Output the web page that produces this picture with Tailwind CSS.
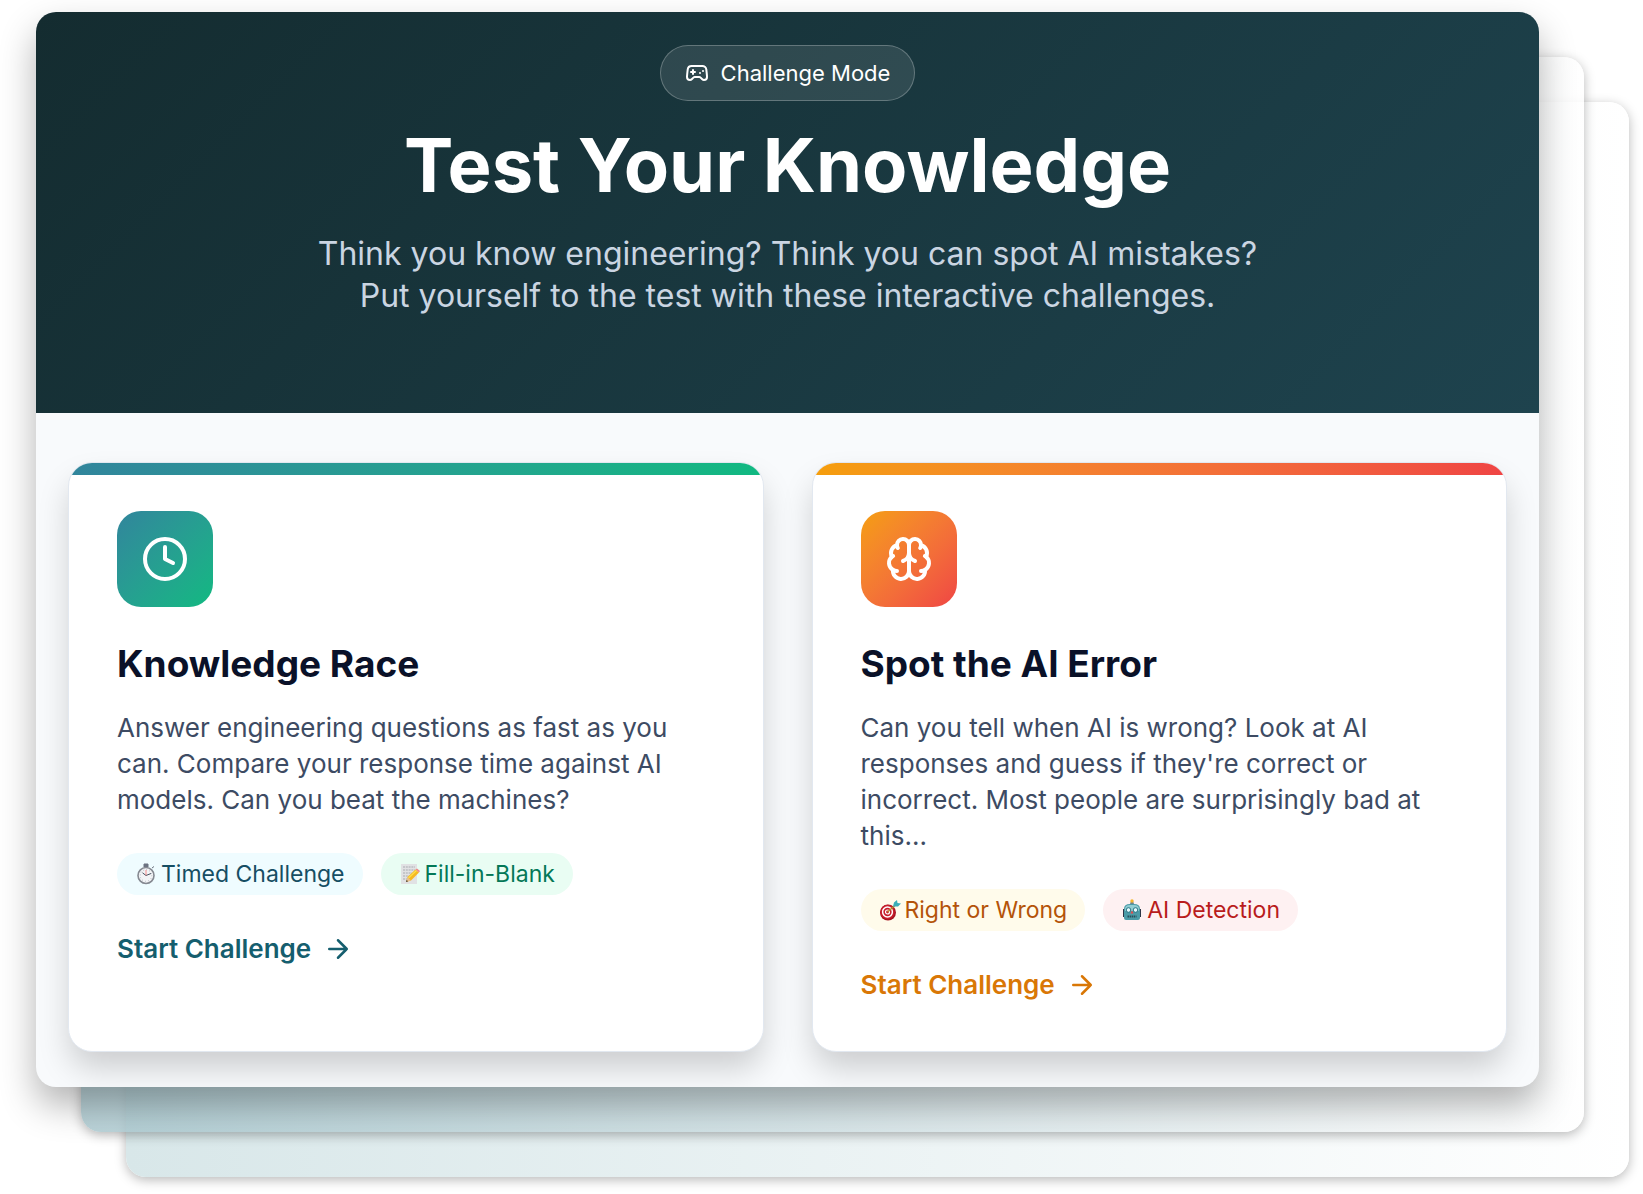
<!DOCTYPE html>
<html lang="en">
<head>
    <meta charset="UTF-8">
    <meta name="viewport" content="width=device-width, initial-scale=1.0">
    <title>Test Your Knowledge</title>
    <script src="https://cdn.jsdelivr.net/npm/@tailwindcss/browser@4"></script>
</head>
<body class="bg-white font-[Inter,sans-serif] overflow-x-hidden">
    <div class="relative isolate mt-3 mb-[107px] ml-9 mr-[104px]">
        <!-- Stacked sheets behind the panel -->
        <div class="absolute inset-0 -z-20 translate-x-[90px] translate-y-[90px] rounded-[20px] bg-linear-to-r from-[#d8e7e9] to-white shadow-[0_3px_12px_rgba(0,0,0,0.28)]"></div>
        <div class="absolute inset-0 -z-10 translate-x-[45px] translate-y-[45px] rounded-[20px] bg-linear-to-r from-[#a9c8cf]/80 to-white/80 shadow-[0_3px_12px_rgba(0,0,0,0.28)]"></div>

        <main class="rounded-[20px] overflow-hidden bg-[#f8fafc] shadow-[0_18px_36px_rgba(0,0,0,0.3)]">
            <header class="bg-linear-135 from-[#142c30] to-[#1e434e] px-8 pt-[33px] pb-24 text-center text-white">
                <div class="inline-flex items-center gap-3 rounded-full border border-white/25 bg-white/10 px-6 py-3">
                    <svg class="size-6" viewBox="0 0 24 24" fill="none" stroke="currentColor" stroke-width="2" stroke-linecap="round" stroke-linejoin="round">
                        <path d="M6 11h4M8 9v4M15 12h.01M18 10h.01"/>
                        <path d="M17.32 5H6.68a4 4 0 0 0-3.978 3.59C2.604 9.416 2 14.456 2 16a3 3 0 0 0 3 3c1 0 1.5-.5 2-1l1.414-1.414A2 2 0 0 1 9.828 16h4.344a2 2 0 0 1 1.414.586L17 18c.5.5 1 1 2 1a3 3 0 0 0 3-3c0-1.545-.604-6.584-.685-7.258A4 4 0 0 0 17.32 5z"/>
                    </svg>
                    <span class="text-[22px] leading-[30px]">Challenge Mode</span>
                </div>
                <h1 class="mt-6 text-[74px] leading-[80px] font-bold">Test Your Knowledge</h1>
                <p class="mt-7 text-[32px] leading-[42px] text-slate-300">Think you know engineering? Think you can spot AI mistakes?<br>Put yourself to the test with these interactive challenges.</p>
            </header>

            <section class="grid grid-cols-2 gap-12 px-8 pt-[49px] pb-[35px]">
                <article class="relative overflow-hidden rounded-3xl border border-slate-200 bg-white p-12 shadow-[0_18px_32px_-2px_rgba(0,0,0,0.18)]">
                    <div class="absolute inset-x-0 top-0 h-3 bg-linear-to-r from-[#31859c] to-[#10b981]"></div>
                    <div class="flex size-24 items-center justify-center rounded-3xl bg-linear-to-br from-[#31859c] to-[#10b981] text-white">
                        <svg class="size-12" viewBox="0 0 24 24" fill="none" stroke="currentColor" stroke-width="2" stroke-linecap="round" stroke-linejoin="round">
                            <circle cx="12" cy="12" r="10"/>
                            <path d="M12 6v6l4 2"/>
                        </svg>
                    </div>
                    <h2 class="mt-[35px] text-[37px] leading-[44px] font-bold text-[#0a1128]">Knowledge Race</h2>
                    <p class="mt-6 text-[26px] leading-9 text-[#3d4b63]">Answer engineering questions as fast as you<br>can. Compare your response time against AI<br>models. Can you beat the machines?</p>
                    <div class="mt-[35px] flex gap-[18px]">
                        <span class="flex items-center gap-1 rounded-full bg-[#effcff] px-[18px] py-[6px] text-[23px] leading-[30px] text-[#164e63]">
                            <svg class="size-[22px]" viewBox="0 0 22 22">
                                <path d="M9 1h4v3H9zM17 5l2-1.500" fill="#6b7280" stroke="#6b7280" stroke-width="1"/>
                                <circle cx="11" cy="12.500" r="8" fill="#f3f4f6" stroke="#858991" stroke-width="1.600"/>
                                <circle cx="11" cy="12.500" r="5.800" fill="none" stroke="#9ca3af" stroke-width="1" stroke-dasharray=".7 2.300"/>
                                <path d="M11 12.500L7.500 9.800M11 12.500l5-2" stroke="#4b5563" stroke-width="1" fill="none"/>
                                <path d="M11 12.500V7" stroke="#f87171" stroke-width=".8"/>
                            </svg>
                            Timed Challenge
                        </span>
                        <span class="flex items-center gap-1 rounded-full bg-[#e9fdf3] px-[18px] py-[6px] text-[23px] leading-[30px] text-[#047857]">
                            <svg class="size-[22px]" viewBox="0 0 22 22">
                                <path d="M2 1h16v20H2z" fill="#e1e2e4"/>
                                <path d="M4 4h12M4 7h12M4 10h9M4 13h6M4 16h4" stroke="#a8abb0" stroke-width="1" stroke-dasharray="2 .8"/>
                                <path d="M7 19l1.500-5 8-7.500 3.500 3-8 8z" fill="#f5b921"/>
                                <path d="M9.500 15l8-7.500" stroke="#fde047" stroke-width="1.200"/>
                                <path d="M16.500 6.500l1.500-1 3 2.500-1 1.500z" fill="#f08a8a"/>
                                <path d="M7 19l1.500-5 3.500 3.500z" fill="#e8c08f"/>
                                <path d="M7 19l.6-2 1.500 1.300z" fill="#333"/>
                            </svg>
                            Fill-in-Blank
                        </span>
                    </div>
                    <a href="#" class="mt-9 inline-flex items-center gap-3 text-[26px] leading-9 font-semibold text-[#155e6e]">
                        Start Challenge
                        <svg class="size-[30px]" viewBox="0 0 24 24" fill="none" stroke="currentColor" stroke-width="2" stroke-linecap="round" stroke-linejoin="round">
                            <path d="M5 12h14M12 5l7 7-7 7"/>
                        </svg>
                    </a>
                </article>

                <article class="relative overflow-hidden rounded-3xl border border-slate-200 bg-white p-12 shadow-[0_18px_32px_-2px_rgba(0,0,0,0.18)]">
                    <div class="absolute inset-x-0 top-0 h-3 bg-linear-to-r from-[#f59e0b] to-[#ef4444]"></div>
                    <div class="flex size-24 items-center justify-center rounded-3xl bg-linear-to-br from-[#f59e0b] to-[#ef4444] text-white">
                        <svg class="size-12" viewBox="0 0 24 24" fill="none" stroke="currentColor" stroke-width="2" stroke-linecap="round" stroke-linejoin="round">
                            <path d="M12 5a3 3 0 1 0-5.997.125 4 4 0 0 0-2.526 5.770 4 4 0 0 0 .556 6.588A4 4 0 1 0 12 18Z"/>
                            <path d="M12 5a3 3 0 1 1 5.997.125 4 4 0 0 1 2.526 5.770 4 4 0 0 1-.556 6.588A4 4 0 1 1 12 18Z"/>
                            <path d="M15 13a4.500 4.500 0 0 1-3-4 4.500 4.500 0 0 1-3 4"/>
                            <path d="M17.599 6.500a3 3 0 0 0 .399-1.375M6.003 5.125A3 3 0 0 0 6.401 6.500M3.477 10.896a4 4 0 0 1 .585-.396M19.938 10.500a4 4 0 0 1 .585.396M6 18a4 4 0 0 1-1.967-.516M19.967 17.484A4 4 0 0 1 18 18"/>
                        </svg>
                    </div>
                    <h2 class="mt-[35px] text-[37px] leading-[44px] font-bold text-[#0a1128]">Spot the AI Error</h2>
                    <p class="mt-6 text-[26px] leading-9 text-[#3d4b63]">Can you tell when AI is wrong? Look at AI<br>responses and guess if they're correct or<br>incorrect. Most people are surprisingly bad at<br>this...</p>
                    <div class="mt-[35px] flex gap-[18px]">
                        <span class="flex items-center gap-1 rounded-full bg-[#fffbeb] px-[18px] py-[6px] text-[23px] leading-[30px] text-[#b45309]">
                            <svg class="size-[22px]" viewBox="0 0 22 22">
                                <ellipse cx="9" cy="13.500" rx="8" ry="8" fill="#a61320"/>
                                <circle cx="8.500" cy="13" r="7.200" fill="#c81e2c"/>
                                <circle cx="8.500" cy="13" r="4.900" fill="none" stroke="#fff" stroke-width="1.500"/>
                                <circle cx="8.500" cy="13" r="2" fill="none" stroke="#fff" stroke-width="1.200"/>
                                <path d="M8.500 13l8-7" stroke="#b9892c" stroke-width="1.600"/>
                                <path d="M14 7.500l1-4 3-2.500.5 3 3.500.5-3 3z" fill="#38aeb9"/>
                            </svg>
                            Right or Wrong
                        </span>
                        <span class="flex items-center gap-1 rounded-full bg-[#fef1f2] px-[18px] py-[6px] text-[23px] leading-[30px] text-[#b91c1c]">
                            <svg class="size-[22px]" viewBox="0 0 22 22">
                                <path d="M2 10h2v8H2zM18 10h2v8h-2z" fill="#2d3748"/>
                                <path d="M3 10q0-5 6-5h4q6 0 6 5v9q0 2-2 2H5q-2 0-2-2z" fill="#4a9ba7"/>
                                <path d="M4 10q0-4 5-4h4q5 0 5 4v2H4z" fill="#91cdd3"/>
                                <path d="M9 5l1-3h2l1 3z" fill="#71838b"/>
                                <circle cx="11" cy="2" r="1.700" fill="#f3b52b"/>
                                <circle cx="7.500" cy="11" r="2.300" fill="#e6fbff" stroke="#287584"/>
                                <circle cx="14.500" cy="11" r="2.300" fill="#e6fbff" stroke="#287584"/>
                                <path d="M11 11.500l1.500 3h-3z" fill="#ef4444"/>
                                <path d="M6.500 17.500h9" stroke="#284e5b" stroke-width="2" stroke-dasharray="1.500 .6"/>
                            </svg>
                            AI Detection
                        </span>
                    </div>
                    <a href="#" class="mt-9 inline-flex items-center gap-3 text-[26px] leading-9 font-semibold text-[#d97706]">
                        Start Challenge
                        <svg class="size-[30px]" viewBox="0 0 24 24" fill="none" stroke="currentColor" stroke-width="2" stroke-linecap="round" stroke-linejoin="round">
                            <path d="M5 12h14M12 5l7 7-7 7"/>
                        </svg>
                    </a>
                </article>
            </section>
        </main>
    </div>
</body>
</html>
